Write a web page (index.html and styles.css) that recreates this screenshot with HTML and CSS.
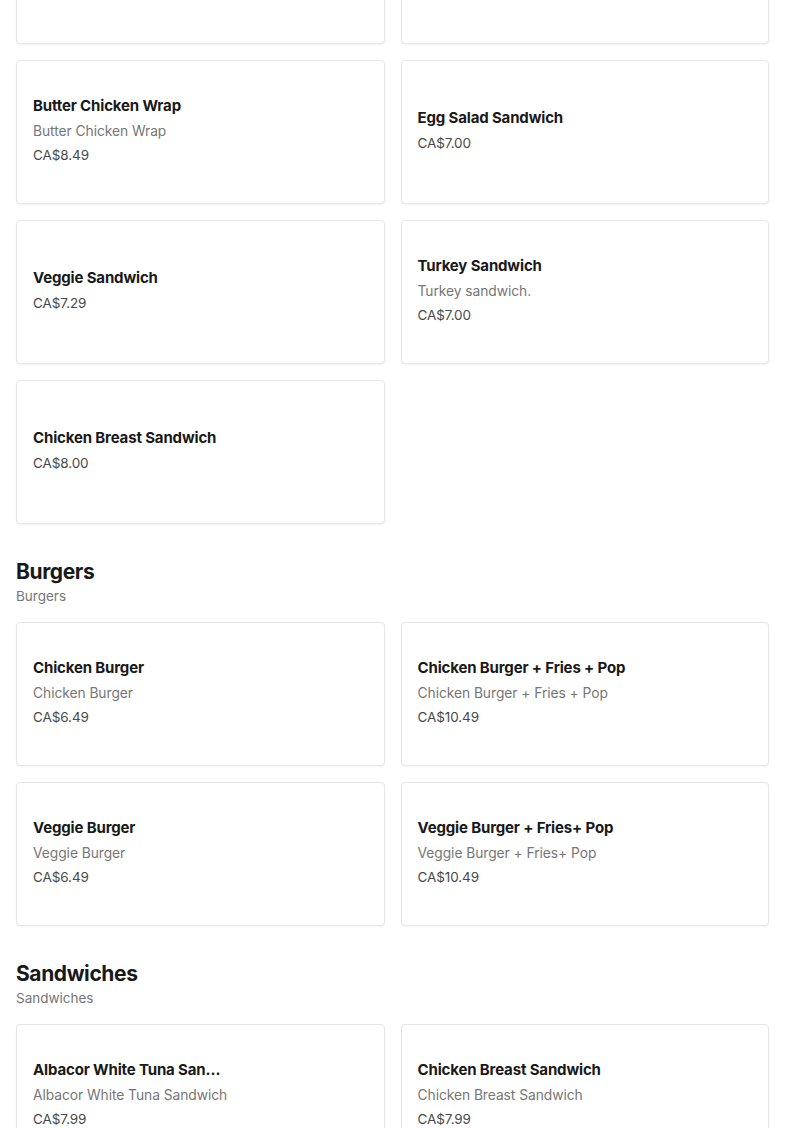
FILE: index.html
```html
<!DOCTYPE html>
<html lang="en">
<head>
<meta charset="utf-8">
<title>Menu</title>
<link rel="stylesheet" href="styles.css">
</head>
<body>
<main class="menu">
  <div class="grid grid-first">
    <div class="card card-top">
      <div class="card-body">
        <div class="title">Chicken Caesar Wrap</div>
        <div class="price">CA$8.49</div>
      </div>
    </div>
    <div class="card card-top">
      <div class="card-body">
        <div class="title">Ham Sandwich</div>
        <div class="desc">Ham sandwich.</div>
        <div class="price">CA$7.00</div>
      </div>
    </div>
    <div class="card">
      <div class="card-body">
        <div class="title">Butter Chicken Wrap</div>
        <div class="desc">Butter Chicken Wrap</div>
        <div class="price">CA$8.49</div>
      </div>
    </div>
    <div class="card">
      <div class="card-body">
        <div class="title">Egg Salad Sandwich</div>
        <div class="price">CA$7.00</div>
      </div>
    </div>
    <div class="card">
      <div class="card-body">
        <div class="title">Veggie Sandwich</div>
        <div class="price">CA$7.29</div>
      </div>
    </div>
    <div class="card">
      <div class="card-body">
        <div class="title">Turkey Sandwich</div>
        <div class="desc">Turkey sandwich.</div>
        <div class="price">CA$7.00</div>
      </div>
    </div>
    <div class="card">
      <div class="card-body">
        <div class="title">Chicken Breast Sandwich</div>
        <div class="price">CA$8.00</div>
      </div>
    </div>
  </div>

  <section class="section">
    <h2 class="section-title">Burgers</h2>
    <p class="section-sub">Burgers</p>
    <div class="grid">
      <div class="card">
        <div class="card-body">
          <div class="title">Chicken Burger</div>
          <div class="desc">Chicken Burger</div>
          <div class="price">CA$6.49</div>
        </div>
      </div>
      <div class="card">
        <div class="card-body">
          <div class="title">Chicken Burger + Fries + Pop</div>
          <div class="desc">Chicken Burger + Fries + Pop</div>
          <div class="price">CA$10.49</div>
        </div>
      </div>
      <div class="card">
        <div class="card-body">
          <div class="title">Veggie Burger</div>
          <div class="desc">Veggie Burger</div>
          <div class="price">CA$6.49</div>
        </div>
      </div>
      <div class="card">
        <div class="card-body">
          <div class="title">Veggie Burger + Fries+ Pop</div>
          <div class="desc">Veggie Burger + Fries+ Pop</div>
          <div class="price">CA$10.49</div>
        </div>
      </div>
    </div>
  </section>

  <section class="section">
    <h2 class="section-title">Sandwiches</h2>
    <p class="section-sub">Sandwiches</p>
    <div class="grid">
      <div class="card">
        <div class="card-body">
          <div class="title title-clip">Albacor White Tuna Sandwich</div>
          <div class="desc">Albacor White Tuna Sandwich</div>
          <div class="price">CA$7.99</div>
        </div>
      </div>
      <div class="card">
        <div class="card-body">
          <div class="title">Chicken Breast Sandwich</div>
          <div class="desc">Chicken Breast Sandwich</div>
          <div class="price">CA$7.99</div>
        </div>
      </div>
    </div>
  </section>
</main>
</body>
</html>
```

FILE: styles.css
```css
html, body {
  margin: 0;
  padding: 0;
  background: #ffffff;
}

body {
  font-family: "Inter", "Liberation Sans", sans-serif;
  color: #191919;
  overflow: hidden;
}

.menu {
  padding: 0 16px;
}

.grid {
  display: grid;
  grid-template-columns: 1fr 1fr;
  gap: 16px;
}

.grid-first {
  margin-top: -100px;
}

.card {
  height: 144px;
  box-sizing: border-box;
  border: 1px solid #e6e6e6;
  border-radius: 4px;
  box-shadow: 0 1px 2px rgba(0, 0, 0, 0.05);
  background: #fff;
  display: flex;
  align-items: center;
  padding: 0 16px 5px;
}

.card-top {
  padding-bottom: 17px;
}

.card-body {
  display: flex;
  flex-direction: column;
  min-width: 0;
}

.title {
  font-size: 15px;
  line-height: 22px;
  font-weight: 700;
  letter-spacing: -0.15px;
  color: #191919;
  white-space: nowrap;
}

.title-clip {
  max-width: 190px;
  overflow: hidden;
  text-overflow: ellipsis;
}

.desc {
  margin-top: 4px;
  font-size: 13.8px;
  line-height: 20px;
  color: #767676;
  letter-spacing: -0.05px;
}

.price {
  margin-top: 4px;
  font-size: 13.5px;
  line-height: 20px;
  color: #494949;
  letter-spacing: -0.1px;
}

.section {
  margin-top: 34px;
}

.section-title {
  margin: 0;
  font-size: 21px;
  line-height: 28px;
  font-weight: 700;
  letter-spacing: -0.4px;
  color: #191919;
}

.section-sub {
  margin: 0 0 16px;
  font-size: 13.5px;
  line-height: 20px;
  color: #767676;
}
```
